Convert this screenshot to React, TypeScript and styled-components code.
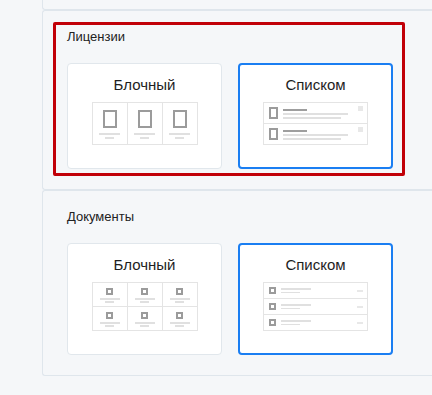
import React from "react"
import styled, { createGlobalStyle } from "styled-components"

const GlobalStyle = createGlobalStyle`
  html, body {
    margin: 0;
    padding: 0;
    background: #f5f7f9;
    overflow: hidden;
  }
  body {
    font-family: "Liberation Sans", Arial, sans-serif;
    color: #222;
  }
`

const Page = styled.div`
  padding-left: 42px;
  height: 395px;
`

const Panel = styled.section<{ $stub?: boolean }>`
  box-sizing: border-box;
  background: #f5f7f9;
  border: 1px solid #dfe6ec;
  border-right: none;
  border-top: ${(p) => (p.$stub ? "none" : "1px solid #dfe6ec")};
  border-radius: ${(p) => (p.$stub ? "0 0 0 3px" : "3px 0 0 3px")};
  height: ${(p) => (p.$stub ? "10px" : "auto")};
  padding: ${(p) => (p.$stub ? "0" : "11px 0 13px 10px")};
`

const Frame = styled.div<{ $highlighted?: boolean }>`
  width: 352px;
  box-sizing: border-box;
  border: 3px solid ${(p) => (p.$highlighted ? "#c10008" : "transparent")};
  border-radius: 2px;
  padding: 4px 9px 4px 11px;
`

const Heading = styled.div`
  font-size: 13px;
  line-height: 16px;
  margin-bottom: 18px;
`

const Options = styled.div`
  display: grid;
  grid-template-columns: 155px 155px;
  gap: 16px;
`

const Card = styled.div<{ $active?: boolean }>`
  box-sizing: border-box;
  background: #fff;
  border: ${(p) => (p.$active ? "2px solid #1a7ef2" : "1px solid #e1e7ec")};
  border-radius: 4px;
  padding: ${(p) => (p.$active ? "10px 0 22px" : "11px 0 23px")};
  display: flex;
  flex-direction: column;
  align-items: center;
`

const CardTitle = styled.div`
  font-size: 15px;
  font-weight: 400;
  line-height: 19px;
  margin-bottom: 8px;
  color: #1e1e1e;
`

const BlockGrid = styled.div<{ $rows: number; $cell: number }>`
  display: grid;
  grid-template-columns: repeat(3, 34px);
  grid-template-rows: repeat(${(p) => p.$rows}, ${(p) => p.$cell}px);
  gap: 1px;
  padding: 1px;
  background: #e4e4e4;
`

const BlockCell = styled.div<{ $small?: boolean }>`
  background: #fff;
  display: flex;
  flex-direction: column;
  align-items: center;
  padding-top: ${(p) => (p.$small ? "5px" : "7px")};
`

const Thumb = styled.div<{ $w: number; $h: number }>`
  width: ${(p) => p.$w}px;
  height: ${(p) => p.$h}px;
  box-sizing: border-box;
  border: 2px solid #9b9b9b;
  flex-shrink: 0;
`

const Bar = styled.div<{ $w: number; $dark?: boolean; $thin?: boolean }>`
  width: ${(p) => p.$w}px;
  height: ${(p) => (p.$thin ? "1.5px" : "2px")};
  background: ${(p) => (p.$dark ? "#9e9e9e" : "#e0e0e0")};
`

const Lines = styled.div<{ $gap: number; $top: number }>`
  display: flex;
  flex-direction: column;
  align-items: center;
  gap: ${(p) => p.$gap}px;
  margin-top: ${(p) => p.$top}px;
`

const ListBox = styled.div`
  width: 105px;
  box-sizing: border-box;
  display: flex;
  flex-direction: column;
  gap: 1px;
  padding: 1px;
  background: #e4e4e4;
`

const ListRow = styled.div<{ $h: number }>`
  height: ${(p) => p.$h}px;
  background: #fff;
  display: flex;
  align-items: flex-start;
  gap: 5px;
  padding: 4px 4px 0 5px;
  box-sizing: border-box;
`

const RowText = styled.div<{ $top: number }>`
  flex: 1;
  display: flex;
  flex-direction: column;
  gap: 2px;
  margin-top: ${(p) => p.$top}px;
`

const Mark = styled.div<{ $w: number; $h: number; $top: number }>`
  width: ${(p) => p.$w}px;
  height: ${(p) => p.$h}px;
  margin-top: ${(p) => p.$top}px;
  background: #e8e8e8;
`

const BlockPreview = ({ rows, small }: { rows: number; small?: boolean }) => (
  <BlockGrid $rows={rows} $cell={small ? 23 : 41}>
    {Array.from({ length: rows * 3 }).map((_, i) => (
      <BlockCell key={i} $small={small}>
        {small ? <Thumb $w={7} $h={7} /> : <Thumb $w={14} $h={18} />}
        <Lines $gap={small ? 1 : 2} $top={small ? 3 : 5}>
          <Bar $w={small ? 20 : 21} />
          <Bar $w={9} />
        </Lines>
      </BlockCell>
    ))}
  </BlockGrid>
)

const ListPreview = ({ rows, small }: { rows: number; small?: boolean }) => (
  <ListBox>
    {Array.from({ length: rows }).map((_, i) =>
      small ? (
        <ListRow key={i} $h={15}>
          <Thumb $w={7} $h={7} />
          <RowText $top={1}>
            <Bar $w={30} $thin />
            <Bar $w={19} $thin />
          </RowText>
          <Mark $w={6} $h={2} $top={3} />
        </ListRow>
      ) : (
        <ListRow key={i} $h={20}>
          <Thumb $w={9} $h={12} />
          <RowText $top={2}>
            <Bar $w={24} $dark />
            <Bar $w={65} />
            <Bar $w={58} />
          </RowText>
          <Mark $w={5} $h={5} $top={-1} />
        </ListRow>
      )
    )}
  </ListBox>
)

type Setting = {
  title: string
  highlighted?: boolean
  rows: number
  listRows: number
  small?: boolean
}

const settings: Setting[] = [
  { title: "Лицензии", highlighted: true, rows: 1, listRows: 2 },
  { title: "Документы", rows: 2, listRows: 3, small: true },
]

const App = () => (
  <Page>
    <GlobalStyle />
    <Panel $stub />
    {settings.map((s) => (
      <Panel key={s.title}>
        <Frame $highlighted={s.highlighted}>
          <Heading>{s.title}</Heading>
          <Options>
            <Card>
              <CardTitle>Блочный</CardTitle>
              <BlockPreview rows={s.rows} small={s.small} />
            </Card>
            <Card $active>
              <CardTitle>Списком</CardTitle>
              <ListPreview rows={s.listRows} small={s.small} />
            </Card>
          </Options>
        </Frame>
      </Panel>
    ))}
  </Page>
)

export default App
